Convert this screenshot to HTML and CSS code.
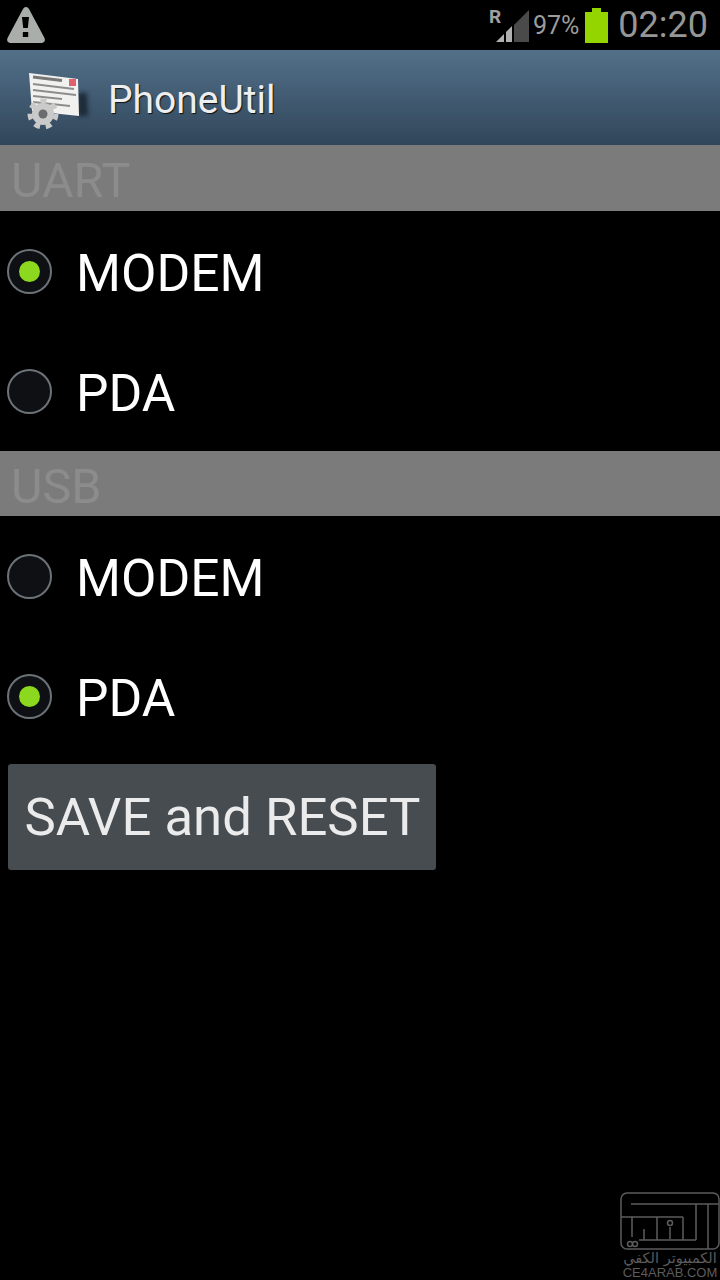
FILE: index.html
```html
<!DOCTYPE html>
<html lang="en">
<head>
    <meta charset="UTF-8">
    <meta name="viewport" content="width=device-width, initial-scale=1.0">
    <title>PhoneUtil</title>
    <link rel="stylesheet" href="styles.css">
</head>
<body>
    <!-- Status bar -->
    <header class="status-bar">
        <svg class="warn-icon" width="40" height="36" viewBox="0 0 40 36">
            <path d="M20 0 Q22 0 23 2 L38.500 31 Q40 35 36 36 L4 36 Q0 35 1.500 31 L17 2 Q18 0 20 0 Z" fill="#a9aeaa"/>
            <path d="M16 10 H23 L21.800 21 H17.200 Z" fill="#000"/>
            <rect x="16.800" y="25" width="5.400" height="5" fill="#000"/>
        </svg>
        <div class="status-right">
            <div class="signal">
                <span class="roaming">R</span>
                <svg width="34" height="34" viewBox="0 0 34 34">
                    <path d="M0 32 L8 24 V32 Z" fill="#b0b0b0"/>
                    <path d="M10 22 L16 16 V32 H10 Z" fill="#b0b0b0"/>
                    <path d="M18 15 L33 0 V32 H18 Z" fill="#4a4a4a"/>
                </svg>
            </div>
            <span class="battery-pct">97%</span>
            <div class="battery">
                <div class="battery-cap"></div>
                <div class="battery-body"></div>
            </div>
            <span class="clock">02:20</span>
        </div>
    </header>

    <!-- Action bar -->
    <div class="action-bar">
        <svg class="app-icon" width="68" height="68" viewBox="0 0 68 68">
            <defs>
                <filter id="soft" x="-50%" y="-50%" width="200%" height="200%">
                    <feGaussianBlur stdDeviation="2"/>
                </filter>
            </defs>
            <path d="M54 29 L63 29 L64 52 L54 52 Z" fill="#1f2b38" filter="url(#soft)"/>
            <path d="M5 9 L54 15 L55 52 L8 47 Z" fill="#f1f1f0"/>
            <path d="M9 13 L38 16.500" stroke="#777" stroke-width="3"/>
            <rect x="45" y="15" width="7" height="7" fill="#e0606e"/>
            <g stroke="#8d8d8d" stroke-width="2">
                <path d="M9 20 L50 25"/>
                <path d="M9 26 L52 31"/>
                <path d="M9 32 L38 35"/>
                <path d="M9 38 L46 42"/>
            </g>
            <circle cx="19" cy="50" r="11" fill="#c9cac9"/>
            <circle cx="19" cy="50" r="13" fill="none" stroke="#c9cac9" stroke-width="5" stroke-dasharray="5.800 5.870"/>
            <circle cx="19" cy="50" r="4.500" fill="#6a6c6d"/>
        </svg>
        <span class="app-title">PhoneUtil</span>
    </div>

    <!-- Form -->
    <main class="settings">
        <h2 class="section-title">UART</h2>
        <div class="radio-row">
            <span class="radio checked"></span>
            <span class="radio-label">MODEM</span>
        </div>
        <div class="radio-row">
            <span class="radio"></span>
            <span class="radio-label">PDA</span>
        </div>

        <h2 class="section-title section-usb">USB</h2>
        <div class="radio-row">
            <span class="radio"></span>
            <span class="radio-label">MODEM</span>
        </div>
        <div class="radio-row">
            <span class="radio checked"></span>
            <span class="radio-label">PDA</span>
        </div>

        <button class="save-btn">SAVE and RESET</button>
    </main>

    <!-- Watermark -->
    <div class="watermark">
        <svg width="100" height="58" viewBox="0 0 100 58">
            <g fill="none" stroke="#5c5c5c" stroke-width="1.500">
                <rect x="1" y="1" width="98" height="56" rx="6"/>
                <path d="M11 12 H99"/>
                <path d="M1 25 H63"/>
                <path d="M76 12 V48 M88 12 V57"/>
                <path d="M12 25 V45 M24 37 V48 M37 25 V48 M63 25 V48 M50 35 V47"/>
                <path d="M19 48 H76"/>
                <circle cx="50" cy="31" r="2.500"/>
                <circle cx="10" cy="52" r="2.500"/>
                <circle cx="15" cy="52" r="2.500"/>
            </g>
        </svg>
        <div class="watermark-ar" dir="rtl">الكمبيوتر الكفي</div>
        <div class="watermark-en">CE4ARAB.COM</div>
    </div>
</body>
</html>
```

FILE: styles.css
```css
/* General Styles */
body {
    font-family: Roboto, "Liberation Sans", sans-serif;
    margin: 0;
    padding: 0;
    width: 720px;
    height: 1280px;
    background-color: #000;
    color: #fff;
    position: relative;
    overflow: hidden;
}

/* Status bar */
.status-bar {
    display: flex;
    justify-content: space-between;
    align-items: center;
    height: 50px;
    padding: 0 12px 0 6px;
    box-sizing: border-box;
}

.warn-icon {
    display: block;
}

.status-right {
    display: flex;
    align-items: center;
}

.signal {
    position: relative;
    width: 34px;
    height: 42px;
    margin-right: 6px;
}

.signal svg {
    position: absolute;
    left: 3px;
    top: 6px;
}

.roaming {
    position: absolute;
    left: -4px;
    top: 3px;
    font-size: 19px;
    line-height: 19px;
    font-weight: 700;
    color: #a0a0a0;
}

.battery-pct {
    font-size: 25px;
    color: #9c9c9c;
}

.battery {
    display: flex;
    flex-direction: column;
    align-items: center;
    margin: 0 10px 0 6px;
}

.battery-cap {
    width: 9px;
    height: 4px;
    background-color: #94d500;
}

.battery-body {
    width: 23px;
    height: 31px;
    background-color: #94d500;
}

.clock {
    font-size: 36px;
    color: #969696;
}

/* Action bar */
.action-bar {
    display: flex;
    align-items: center;
    height: 95px;
    padding-left: 24px;
    box-sizing: border-box;
    background: linear-gradient(#527089, #31465a);
}

.app-icon {
    display: block;
    margin-right: 16px;
    overflow: visible;
    filter: blur(0.6px);
}

.app-title {
    font-size: 39px;
    padding-top: 4px;
    color: #eceeef;
    text-shadow: 1px 1px 1px #111;
}

/* Form */
.section-title {
    margin: 0;
    height: 66px;
    padding-left: 11px;
    background-color: #7b7b7b;
    color: #8c8c8c;
    font-size: 48.500px;
    font-weight: 400;
    line-height: 71px;
}

.section-usb {
    height: 65px;
}

.radio-row {
    display: flex;
    align-items: center;
    height: 120px;
    padding-left: 7px;
}

.radio {
    display: flex;
    justify-content: center;
    align-items: center;
    width: 45px;
    height: 45px;
    box-sizing: border-box;
    border: 2px solid #6b7278;
    border-radius: 50%;
    background-color: #0e1013;
    margin-right: 24px;
}

.radio.checked::after {
    content: "";
    width: 21px;
    height: 21px;
    border-radius: 50%;
    background-color: #8bd81e;
}

.radio-label {
    font-size: 51.500px;
    padding-top: 4px;
}

.save-btn {
    display: block;
    width: 428px;
    height: 106px;
    margin: 8px 0 0 8px;
    padding: 0 0 0 1px;
    border: none;
    border-radius: 3px;
    background-color: #474c50;
    color: #ebebeb;
    font-family: inherit;
    font-size: 52.700px;
}

/* Watermark */
.watermark {
    position: absolute;
    right: 0;
    bottom: 0;
    width: 100px;
    height: 88px;
    color: #5c5c5c;
    text-align: center;
}

.watermark svg {
    display: block;
}

.watermark-ar {
    font-family: "DejaVu Sans", sans-serif;
    font-size: 14.500px;
    line-height: 16px;
}

.watermark-en {
    font-family: "Liberation Sans", sans-serif;
    font-size: 13px;
    line-height: 13px;
}
```
